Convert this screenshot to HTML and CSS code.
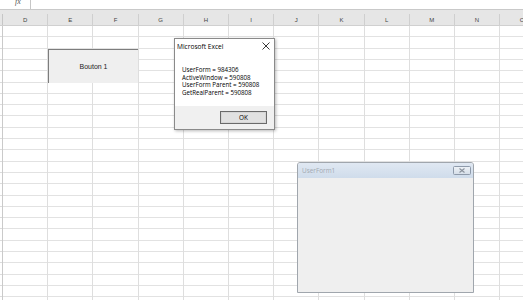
FILE: index.html
```html
<!DOCTYPE html>
<html>
<head>
<meta charset="utf-8">
<link rel="stylesheet" href="styles.css">
</head>
<body>
<div class="app">
  <div class="formula">
    <div class="fx-box"><span class="tick">ˇ</span><span class="fx">fx</span></div>
    <div class="input"></div>
  </div>
  <div class="band"></div>
  <div class="colhead">
    <div class="corner"></div>
    <div class="col">D</div><div class="col">E</div><div class="col">F</div><div class="col">G</div>
    <div class="col">H</div><div class="col">I</div><div class="col">J</div><div class="col">K</div>
    <div class="col">L</div><div class="col">M</div><div class="col">N</div><div class="col">O</div>
  </div>
  <div class="sheet">
    <div class="rowhead"></div>
    <div class="cells"></div>

    <div class="shape-btn">Bouton 1</div>

    <div class="msgbox">
      <div class="msg-title">
        <span>Microsoft Excel</span>
        <svg class="msg-close" width="8" height="8" viewBox="0 0 8 8"><path d="M0.5 0.5 L7.5 7.5 M7.5 0.5 L0.5 7.5" stroke="#222" stroke-width="0.9" fill="none"/></svg>
      </div>
      <div class="msg-body">
        <div>UserForm = 984306</div>
        <div>ActiveWindow = 590808</div>
        <div>UserForm Parent = 590808</div>
        <div>GetRealParent = 590808</div>
      </div>
      <div class="msg-foot">
        <div class="ok">OK</div>
      </div>
    </div>

    <div class="uform">
      <div class="uf-title">
        <span>UserForm1</span>
        <div class="uf-close">
          <svg width="8" height="5" viewBox="0 0 8 5"><path d="M1.5 0.5 L6.5 4.5 M6.5 0.5 L1.5 4.5" stroke="#8a929c" stroke-width="1.1" fill="none"/></svg>
        </div>
      </div>
      <div class="uf-body"></div>
    </div>
  </div>
</div>
</body>
</html>
```

FILE: styles.css
```css
* { box-sizing: border-box; }
html, body { margin: 0; padding: 0; }
body {
  width: 523px;
  height: 300px;
  overflow: hidden;
  background: #fff;
  font-family: "Open Sans", "Noto Sans", "Liberation Sans", sans-serif;
  -webkit-font-smoothing: antialiased;
}
.app {
  display: flex;
  flex-direction: column;
  width: 523px;
  height: 300px;
}
.formula {
  height: 10px;
  display: flex;
  background: #fff;
  border-bottom: 1px solid #c9c9c9;
  flex: none;
}
.fx-box {
  width: 31px;
  border-right: 1px solid #c6c6c6;
  position: relative;
  overflow: hidden;
}
.tick {
  position: absolute;
  left: 0;
  top: -3px;
  font-size: 8px;
  line-height: 8px;
  color: #666;
}
.fx {
  position: absolute;
  left: 15px;
  top: -2px;
  font-family: "Liberation Serif", serif;
  font-style: italic;
  font-size: 8px;
  line-height: 8px;
  color: #555;
}
.input { flex: 1; }
.band {
  height: 4px;
  background: #e6e6e6;
  flex: none;
}
.colhead {
  height: 12px;
  display: flex;
  background: #e6e6e6;
  flex: none;
  border-bottom: 1px solid #d0d0d0;
}
.corner {
  width: 3px;
  flex: none;
  border-right: 1px solid #c6c6c6;
}
.col {
  width: 45.2px;
  flex: none;
  border-right: 1px solid #cfcfcf;
  text-align: center;
  font-size: 6px;
  line-height: 12px;
  color: #444;
  font-family: "Liberation Sans", sans-serif;
}
.sheet {
  flex: 1;
  position: relative;
  display: flex;
}
.rowhead {
  width: 3px;
  flex: none;
  border-right: 1.5px solid #cacaca;
  background-image: repeating-linear-gradient(to bottom, transparent 0, transparent 10.3px, #dcdcdc 10.3px, #dcdcdc 11.3px);
}
.cells {
  flex: 1;
  background-image:
    repeating-linear-gradient(to right, transparent 0, transparent 44.2px, #dedede 44.2px, #dedede 45.2px),
    repeating-linear-gradient(to bottom, transparent 0, transparent 10.3px, #e2e2e2 10.3px, #e2e2e2 11.3px);
}
.shape-btn {
  position: absolute;
  left: 48px;
  top: 23px;
  width: 90px;
  height: 34px;
  background: #efefef;
  border-top: 1px solid #7d7d7d;
  border-left: 1px solid #7d7d7d;
  display: flex;
  align-items: center;
  justify-content: center;
  font-size: 7px;
  color: #222;
  font-family: "Liberation Sans", sans-serif;
}
.msgbox {
  position: absolute;
  left: 174px;
  top: 12px;
  width: 101px;
  height: 92px;
  background: #fff;
  border: 1px solid #8a8a8a;
  box-shadow: 1px 1px 3px rgba(0,0,0,0.28);
  display: flex;
  flex-direction: column;
  font-family: "Open Sans", "Noto Sans", sans-serif;
  color: #000;
}
.msg-title {
  height: 14px;
  display: flex;
  align-items: center;
  justify-content: space-between;
  padding: 0 4px 0 2px;
  font-size: 6.6px;
}
.msg-close { display: block; }
.msg-body {
  flex: 1;
  padding: 13px 0 0 7px;
  font-size: 6.2px;
  line-height: 7.6px;
}
.msg-foot {
  height: 23px;
  background: #f0f0f0;
  display: flex;
  justify-content: flex-end;
  align-items: center;
  padding-right: 7px;
  padding-bottom: 1px;
}
.ok {
  width: 47px;
  height: 13px;
  border: 1px solid #6a6a6a;
  box-shadow: inset 0 0 0 1px #d6d6d6;
  background: #e1e1e1;
  font-size: 6.4px;
  display: flex;
  align-items: center;
  justify-content: center;
}
.uform {
  position: absolute;
  left: 297px;
  top: 136px;
  width: 177px;
  height: 131px;
  border: 1.5px solid #a0a6ad;
  border-radius: 3px 3px 0 0;
  background: #efefef;
  display: flex;
  flex-direction: column;
}
.uf-title {
  height: 15px;
  flex: none;
  padding: 0 2px 0 4px;
  background: linear-gradient(to bottom, #e0e8f2 0%, #cfdceb 100%);
  border-radius: 2px 2px 0 0;
  display: flex;
  align-items: center;
  justify-content: space-between;
  font-size: 6.4px;
  color: #a2a9b1;
}
.uf-close {
  width: 18px;
  height: 9px;
  border: 1px solid #8e9aaa;
  border-radius: 1.5px;
  background: linear-gradient(to bottom, #edf1f6, #d6dfe9);
  display: flex;
  align-items: center;
  justify-content: center;
}
.uf-close svg { display: block; }
.uf-body {
  flex: 1;
  background: #efefef;
}
```
